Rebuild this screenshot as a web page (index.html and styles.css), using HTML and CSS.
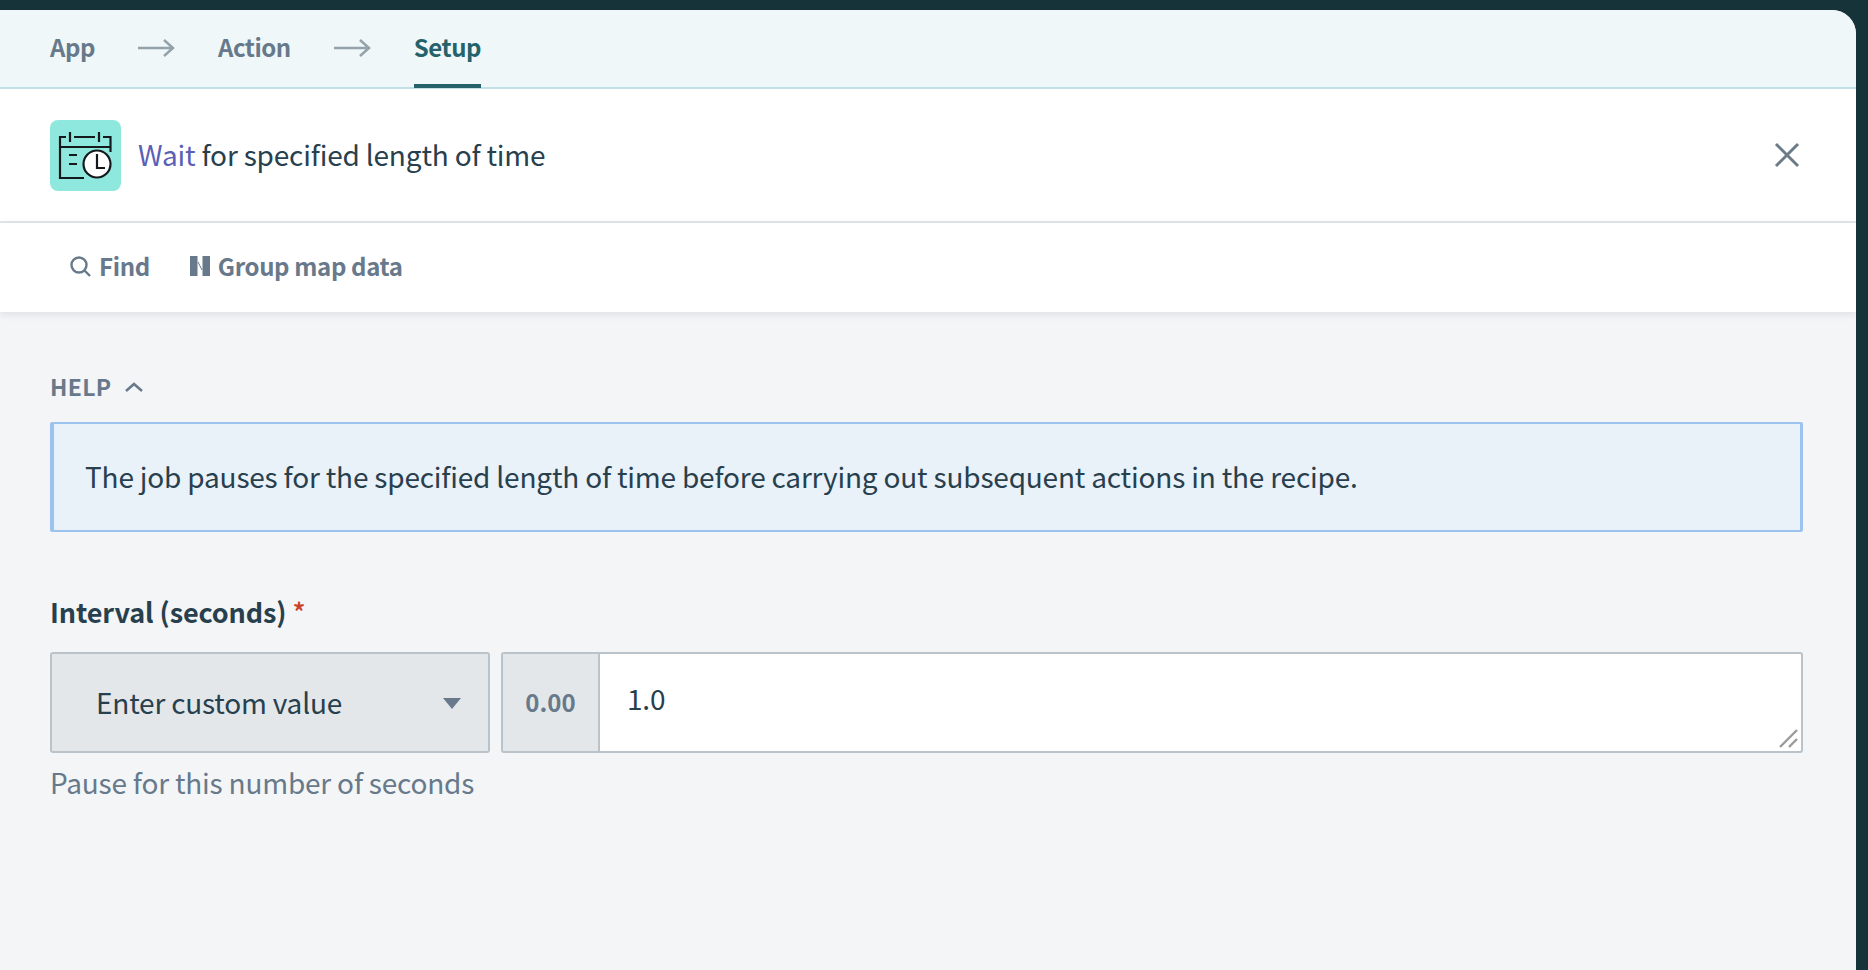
FILE: index.html
```html
<!DOCTYPE html>
<html lang="en">
<head>
    <meta charset="UTF-8">
    <meta name="viewport" content="width=device-width, initial-scale=1.0">
    <title>Wait for specified length of time</title>
    <link rel="stylesheet" href="styles.css">
</head>
<body>
    <div class="panel">
        <nav class="steps">
            <span class="step">App</span>
            <svg class="step-arrow" width="37" height="18" viewBox="0 0 37 18"><path d="M0 9H35M26 1L35 9L26 17"/></svg>
            <span class="step">Action</span>
            <svg class="step-arrow" width="37" height="18" viewBox="0 0 37 18"><path d="M0 9H35M26 1L35 9L26 17"/></svg>
            <span class="step step-active">Setup</span>
        </nav>

        <header class="title-bar">
            <div class="app-icon">
                <svg width="71" height="71" viewBox="0 0 71 71">
                    <path class="line" d="M34 58H10V17H16M24 17H45M53 17H60.500V32M10 27H60.500M20 12V22M49 12V22M19 35H27M19 44H27"/>
                    <circle class="clock" cx="47" cy="44" r="13.500"/>
                    <path class="line" d="M47 34V48H55"/>
                </svg>
            </div>
            <h1 class="title"><span class="title-verb">Wait</span> for specified length of time</h1>
            <svg class="close" width="26" height="26" viewBox="0 0 26 26"><path d="M2 2L24 24M24 2L2 24"/></svg>
        </header>

        <div class="toolbar">
            <span class="tool">
                <svg width="22" height="22" viewBox="0 0 22 22"><circle cx="10" cy="10" r="7.5"/><path d="M15.5 15.5L21 21"/></svg>
                Find
            </span>
            <span class="tool">
                <svg width="20" height="20" viewBox="0 0 20 20"><rect class="bar" x="0" y="0" width="7.5" height="20"/><rect class="bar" x="12.5" y="0" width="7.5" height="20"/><path class="thin" d="M8 6L12 14"/></svg>
                Group map data
            </span>
        </div>

        <main class="content">
            <div class="help-toggle">
                <span>HELP</span>
                <svg width="20" height="12" viewBox="0 0 20 12"><path d="M2 10L10 3L18 10"/></svg>
            </div>
            <div class="help-box">The job pauses for the specified length of time before carrying out subsequent actions in the recipe.</div>

            <div class="field-label">Interval (seconds) <span class="required">*</span></div>
            <div class="field-row">
                <div class="mode-select">
                    <span>Enter custom value</span>
                    <span class="caret"></span>
                </div>
                <div class="number-input">
                    <div class="number-prefix">0.00</div>
                    <div class="number-value">1.0</div>
                    <svg class="resizer" width="20" height="20" viewBox="0 0 20 20"><path d="M1 18L18 1M10 18L18 10"/></svg>
                </div>
            </div>
            <div class="field-hint">Pause for this number of seconds</div>
        </main>
    </div>
</body>
</html>
```
FILE: styles.css
```css
* {
    box-sizing: border-box;
}

html,
body {
    height: 100%;
}

body {
    margin: 0;
    padding: 10px 12px 0 0;
    background-color: #17333a;
    font-family: "Noto Sans CJK JP", "Noto Sans", sans-serif;
    color: #28404d;
    overflow: hidden;
}

.panel {
    height: 100%;
    background-color: #f3f5f7;
    border-top-right-radius: 24px;
    overflow: hidden;
}

.steps {
    height: 79px;
    padding: 0 50px;
    display: flex;
    align-items: center;
    gap: 43px;
    background-color: #eff7f9;
    border-bottom: 2px solid #bfe0e4;
}

.step {
    height: 79px;
    line-height: 75px;
    font-size: 24px;
    font-weight: 700;
    letter-spacing: -0.45px;
    color: #67798a;
}

.step-active {
    color: #26626a;
    border-bottom: 4px solid #26626a;
    border-radius: 3px 3px 0 0;
}

.step-arrow {
    margin-top: -1px;
}

.step-arrow path {
    fill: none;
    stroke: #94a3ab;
    stroke-width: 2.5;
}

.title-bar {
    height: 134px;
    padding: 0 56px 0 50px;
    display: flex;
    align-items: center;
    gap: 17px;
    background-color: #fff;
    border-bottom: 2px solid #e3e7ea;
}

.app-icon {
    width: 71px;
    height: 71px;
    background-color: #8fe8dd;
    border-radius: 8px;
}

.app-icon svg {
    display: block;
}

.line {
    fill: none;
    stroke: #14191c;
    stroke-width: 2.2;
}

.clock {
    fill: #fff;
    stroke: #14191c;
    stroke-width: 2.2;
}

.title {
    margin: 0 0 2px;
    flex: 1;
    font-size: 28px;
    font-weight: 400;
    letter-spacing: -0.18px;
    line-height: 40px;
}

.title-verb {
    color: #5b5fb5;
}

.close path {
    fill: none;
    stroke: #6b7c88;
    stroke-width: 3;
}

.toolbar {
    height: 89px;
    padding: 0 0 4px 69px;
    display: flex;
    align-items: center;
    gap: 40px;
    background-color: #fff;
    box-shadow: 0 2px 8px rgba(40, 64, 77, 0.12);
    position: relative;
}

.tool {
    display: flex;
    align-items: center;
    gap: 8px;
    font-size: 24px;
    font-weight: 700;
    letter-spacing: -0.35px;
    line-height: 32px;
    color: #67798a;
}

.tool svg {
    fill: none;
    stroke: #67798a;
    stroke-width: 2.4;
}

.tool .bar {
    fill: #67798a;
    stroke: none;
}

.tool .thin {
    stroke-width: 1;
}

.content {
    padding: 58px 53px 0 50px;
}

.help-toggle {
    height: 32px;
    display: flex;
    align-items: center;
    gap: 13px;
    font-size: 23px;
    font-weight: 700;
    letter-spacing: 0.3px;
    color: #67798a;
}

.help-toggle svg {
    margin-top: 2px;
    fill: none;
    stroke: #67798a;
    stroke-width: 2.5;
}

.help-box {
    margin-top: 20px;
    height: 110px;
    padding: 0 0 2px 31px;
    display: flex;
    align-items: center;
    font-size: 28px;
    letter-spacing: -0.19px;
    background-color: #e9f1f9;
    border: solid #9cc2ee;
    border-width: 2px 3px 2px 4px;
    border-radius: 2px;
}

.field-label {
    margin-top: 60px;
    font-size: 27px;
    font-weight: 700;
    letter-spacing: -0.1px;
    line-height: 40px;
}

.required {
    color: #c8432a;
    font-weight: 500;
}

.field-row {
    margin-top: 20px;
    display: flex;
    gap: 11px;
    height: 101px;
}

.mode-select {
    width: 440px;
    padding: 0 27px 1px 44px;
    display: flex;
    align-items: center;
    justify-content: space-between;
    font-size: 28px;
    letter-spacing: -0.2px;
    background-color: #e3e7ea;
    border: 2px solid #bac3ca;
    border-radius: 3px;
}

.caret {
    width: 0;
    height: 0;
    margin-top: 2px;
    border-left: 9px solid transparent;
    border-right: 9px solid transparent;
    border-top: 11px solid #67798a;
}

.number-input {
    flex: 1;
    display: flex;
    background-color: #fff;
    border: 2px solid #bac3ca;
    border-radius: 3px;
    position: relative;
}

.number-prefix {
    width: 97px;
    padding-bottom: 3px;
    display: flex;
    align-items: center;
    justify-content: center;
    font-size: 24px;
    font-weight: 700;
    color: #67798a;
    background-color: #e3e7ea;
    border-right: 2px solid #bac3ca;
}

.number-value {
    padding: 24px 0 0 27px;
    font-size: 28px;
    letter-spacing: -0.2px;
    line-height: 40px;
}

.resizer {
    position: absolute;
    right: 2px;
    bottom: 2px;
}

.resizer path {
    fill: none;
    stroke: #9a9a9a;
    stroke-width: 2.4;
}

.field-hint {
    margin-top: 9px;
    font-size: 28px;
    letter-spacing: -0.2px;
    line-height: 40px;
    color: #67798a;
}
```
